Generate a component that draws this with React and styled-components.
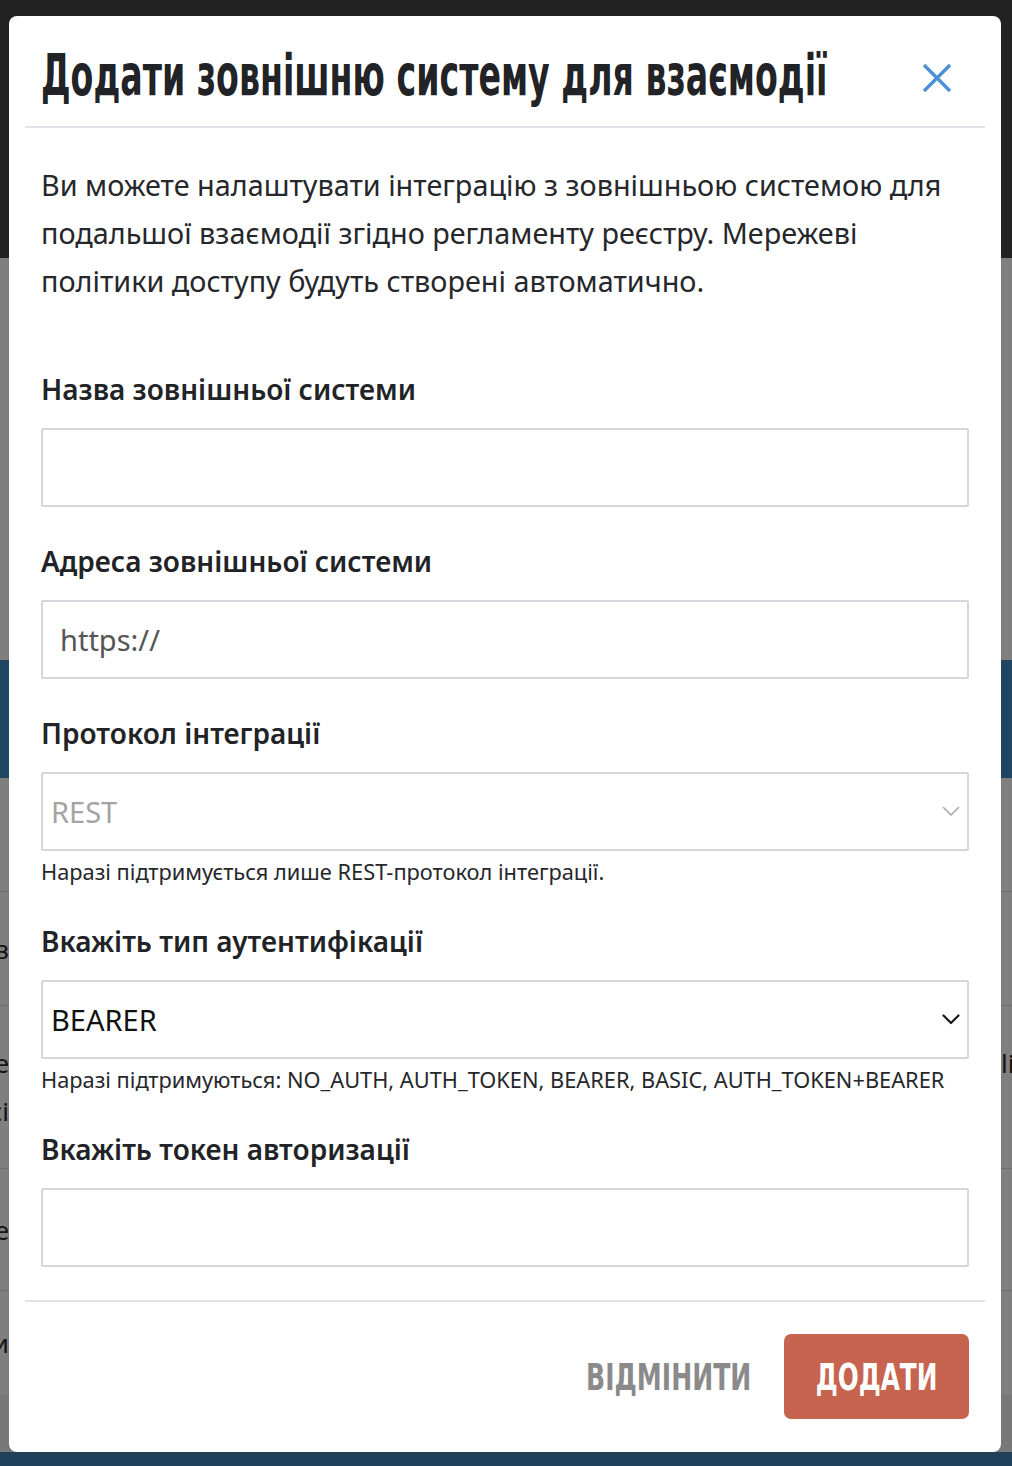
import React from "react";
import styled, { createGlobalStyle } from "styled-components";

const Global = createGlobalStyle`
  html, body { margin: 0; padding: 0; }
  body {
    background: #7f7f7f;
    font-family: "Noto Sans", "DejaVu Sans", sans-serif;
    overflow: hidden;
  }
  * { box-sizing: border-box; }
`;

const Stage = styled.div`
  position: relative;
  width: 1012px;
  height: 1466px;
  overflow: hidden;
`;

const Backdrop = styled.div`
  display: flex;
  flex-direction: column;
  height: 100%;
`;

const Band = styled.div`
  flex: none;
  height: ${(p) => p.$h}px;
  background: ${(p) => p.$bg};
`;

const Row = styled.div`
  flex: none;
  height: ${(p) => p.$h}px;
  border-top: 1px solid #6e6e6e;
  display: flex;
  justify-content: space-between;
  align-items: center;
  background: #7f7f7f;
`;

const EdgeLeft = styled.div`
  width: 9px;
  overflow: hidden;
  display: flex;
  justify-content: flex-end;
  font-size: 26px;
  line-height: 48px;
  color: #151515;
  white-space: nowrap;
  text-align: right;
`;

const EdgeRight = styled.div`
  width: 11px;
  overflow: hidden;
  font-size: 26px;
  line-height: 48px;
  color: #151515;
  white-space: nowrap;
  align-self: flex-start;
  margin-top: ${(p) => p.$top || 0}px;
`;

const Modal = styled.div`
  position: absolute;
  top: 16px;
  left: 9px;
  width: 992px;
  background: #fff;
  border-radius: 8px;
  display: flex;
  flex-direction: column;
`;

const Header = styled.div`
  margin: 0 16px;
  height: 112px;
  padding: 6px 16px 0;
  border-bottom: 2px solid #dfe3e8;
  display: flex;
  align-items: center;
  justify-content: space-between;
`;

const Condensed = styled.span`
  display: inline-block;
  font-family: "DejaVu Sans", sans-serif;
  font-weight: 700;
  white-space: nowrap;
  transform: scaleX(${(p) => p.$sx || 1});
  transform-origin: ${(p) => p.$origin || "left"} center;
`;

const Title = styled.h2`
  flex: 1;
  min-width: 0;
  margin: 0;
  font-size: 57px;
  line-height: 60px;
  color: #212326;
  white-space: nowrap;
`;

const CloseButton = styled.button`
  flex: none;
  border: 0;
  background: none;
  padding: 0;
  width: 32px;
  height: 32px;
  margin: 8px 16px 0 0;
  display: flex;
  align-items: center;
  justify-content: center;
  cursor: pointer;
`;

const Body = styled.div`
  padding: 33px 32px 33px;
`;

const Description = styled.p`
  margin: 0 0 66px;
  font-size: 28.8px;
  line-height: 48px;
  color: #25272b;
`;

const Field = styled.div`
  margin-top: 36px;
`;

const Label = styled.label`
  display: block;
  font-size: 28px;
  font-weight: 600;
  line-height: 36px;
  margin-bottom: 21px;
  color: #212326;
`;

const TextInput = styled.input`
  display: block;
  width: 100%;
  height: 79px;
  border: 2px solid #d4d5dd;
  border-radius: 2px;
  padding: 0 17px;
  font-family: "Noto Sans", sans-serif;
  font-size: 29px;
  color: #555;
  background: #fff;
  outline: none;
`;

const SelectBox = styled.div`
  height: 79px;
  border: 2px solid #d4d5dd;
  border-radius: 2px;
  padding: 0 7px 0 8px;
  display: flex;
  align-items: center;
  justify-content: space-between;
  font-size: 29px;
  color: ${(p) => (p.$disabled ? "#a3a3a3" : "#111")};
`;

const Chevron = styled.svg`
  width: 18px;
  height: 11px;
  color: ${(p) => (p.$disabled ? "#a8a8a8" : "#1a1a1a")};
`;

const Help = styled.div`
  margin-top: 6px;
  font-size: 21.8px;
  line-height: 30px;
  color: #25272b;
`;

const Footer = styled.div`
  margin: 0 16px;
  border-top: 2px solid #dfe3e8;
  padding: 32px 16px 33px;
  display: flex;
  justify-content: flex-end;
  align-items: center;
  gap: 33px;
`;

const CancelButton = styled.button`
  border: 0;
  background: none;
  padding: 0;
  font-size: 38px;
  color: #8a8a8a;
  cursor: pointer;
`;

const PrimaryButton = styled.button`
  border: 0;
  width: 185px;
  height: 85px;
  border-radius: 7px;
  background: #c6644f;
  color: #fff;
  font-size: 38px;
  cursor: pointer;
  display: flex;
  align-items: center;
  justify-content: center;
  overflow: visible;
`;

const ChevronIcon = ({ disabled }) => (
  <Chevron $disabled={disabled} viewBox="0 0 18 11" fill="none">
    <path
      d="M1.5 1.5l7.5 7.5 7.5-7.5"
      stroke="currentColor"
      strokeWidth={disabled ? 1.6 : 2.2}
      strokeLinecap="round"
      strokeLinejoin="round"
    />
  </Chevron>
);

export default function App() {
  return (
    <Stage>
      <Global />
      <Backdrop>
        <Band $h={258} $bg="#222222" />
        <Band $h={402} $bg="#7f7f7f" />
        <Band $h={118} $bg="#1f4562" />
        <Band $h={113} $bg="#7f7f7f" />
        <Row $h={114}>
          <EdgeLeft>Назва зв</EdgeLeft>
        </Row>
        <Row $h={163}>
          <EdgeLeft>
            <div>
              <div>Адресе</div>
              <div>Адресі</div>
            </div>
          </EdgeLeft>
          <EdgeRight $top={33}>lіst</EdgeRight>
        </Row>
        <Row $h={122}>
          <EdgeLeft>Прое</EdgeLeft>
        </Row>
        <Row $h={105}>
          <EdgeLeft>Ви</EdgeLeft>
        </Row>
        <Band $h={57} $bg="#787878" />
        <Band $h={20} $bg="#21405a" />
      </Backdrop>

      <Modal>
        <Header>
          <Title>
            <Condensed $sx={0.583}>Додати зовнішню систему для взаємодії</Condensed>
          </Title>
          <CloseButton aria-label="Закрити">
            <svg width="30" height="30" viewBox="0 0 30 30">
              <path d="M2 2L28 28M28 2L2 28" stroke="#4a90d6" strokeWidth="3.4" />
            </svg>
          </CloseButton>
        </Header>

        <Body>
          <Description>
            Ви можете налаштувати інтеграцію з зовнішньою системою для подальшої взаємодії згідно регламенту реєстру. Мережеві політики доступу будуть створені автоматично.
          </Description>

          <Field>
            <Label>Назва зовнішньої системи</Label>
            <TextInput defaultValue="" />
          </Field>

          <Field>
            <Label>Адреса зовнішньої системи</Label>
            <TextInput defaultValue="https://" />
          </Field>

          <Field>
            <Label>Протокол інтеграції</Label>
            <SelectBox $disabled>
              <span>REST</span>
              <ChevronIcon disabled />
            </SelectBox>
            <Help>Наразі підтримується лише REST-протокол інтеграції.</Help>
          </Field>

          <Field>
            <Label>Вкажіть тип аутентифікації</Label>
            <SelectBox>
              <span>BEARER</span>
              <ChevronIcon />
            </SelectBox>
            <Help>Наразі підтримуються: NO_AUTH, AUTH_TOKEN, BEARER, BASIC, AUTH_TOKEN+BEARER</Help>
          </Field>

          <Field>
            <Label>Вкажіть токен авторизації</Label>
            <TextInput defaultValue="" />
          </Field>
        </Body>

        <Footer>
          <CancelButton>
            <Condensed $sx={0.66} $origin="right">ВІДМІНИТИ</Condensed>
          </CancelButton>
          <PrimaryButton>
            <Condensed $sx={0.65} $origin="center">ДОДАТИ</Condensed>
          </PrimaryButton>
        </Footer>
      </Modal>
    </Stage>
  );
}
